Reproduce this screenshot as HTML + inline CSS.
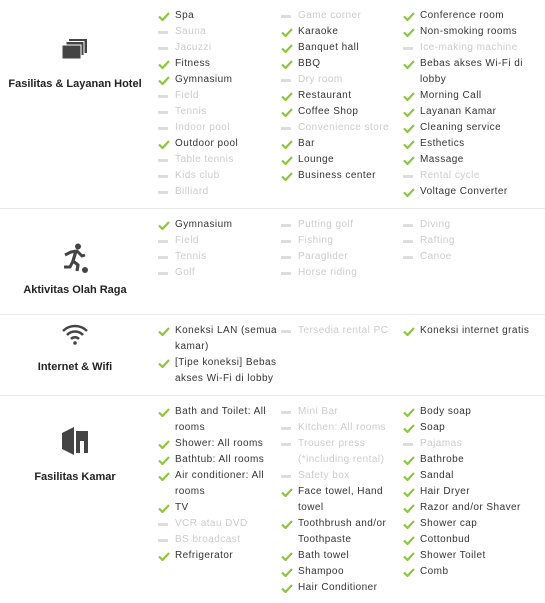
<!DOCTYPE html>
<html><head><meta charset="utf-8"><style>
*{margin:0;padding:0;box-sizing:border-box}
body{width:545px;height:603px;background:#fff;font-family:"Liberation Sans",Arial,sans-serif;overflow:hidden;position:relative}
.sec{position:absolute;left:0;width:545px;border-bottom:1px solid #e8e8e8}
.lab{position:absolute;left:0;width:150px;text-align:center;font-weight:bold;font-size:11px;color:#222}
.ic{position:absolute;left:0;width:150px;text-align:center}
.col{position:absolute;list-style:none}
.col li{position:relative;padding-left:17px;font-size:10px;line-height:16px;letter-spacing:.45px;color:#333}
.col li.n{color:#ccc}
.col li.n::before{content:"";position:absolute;left:0;top:7px;width:10px;height:3px;background:#ddd}
.chk{position:absolute;left:0;top:4px}
.c1{left:158px;width:122px}.c2{left:281px;width:120px}.c3{left:403px;width:140px}
</style></head><body>
<svg width="0" height="0" style="position:absolute"><defs><symbol id="k" viewBox="0 0 12 9"><path d="M1 4.5 L4.5 8 L11 1" fill="none" stroke="#8dc63f" stroke-width="2.2"/></symbol></defs></svg>

<div class="sec" style="top:0;height:209px">
 <div class="ic" style="top:39px"><svg width="28" height="22" viewBox="0 0 28 22"><rect x="8" y="0" width="18" height="14" fill="#444"/><rect x="5" y="2.5" width="18" height="14" fill="#444" stroke="#fff" stroke-width="1"/><rect x="1" y="6" width="19" height="14" fill="#444" stroke="#fff" stroke-width="1"/></svg></div>
 <div class="lab" style="top:78px">Fasilitas &amp; Layanan Hotel</div>
 <ul class="col c1" style="top:8px">
  <li class="y">Spa</li><li class="n">Sauna</li><li class="n">Jacuzzi</li><li class="y">Fitness</li><li class="y">Gymnasium</li><li class="n">Field</li><li class="n">Tennis</li><li class="n">Indoor pool</li><li class="y">Outdoor pool</li><li class="n">Table tennis</li><li class="n">Kids club</li><li class="n">Billiard</li>
 </ul>
 <ul class="col c2" style="top:8px">
  <li class="n">Game corner</li><li class="y">Karaoke</li><li class="y">Banquet hall</li><li class="y">BBQ</li><li class="n">Dry room</li><li class="y">Restaurant</li><li class="y">Coffee Shop</li><li class="n">Convenience store</li><li class="y">Bar</li><li class="y">Lounge</li><li class="y">Business center</li>
 </ul>
 <ul class="col c3" style="top:8px">
  <li class="y">Conference room</li><li class="y">Non-smoking rooms</li><li class="n">Ice-making machine</li><li class="y">Bebas akses Wi-Fi di lobby</li><li class="y">Morning Call</li><li class="y">Layanan Kamar</li><li class="y">Cleaning service</li><li class="y">Esthetics</li><li class="y">Massage</li><li class="n">Rental cycle</li><li class="y">Voltage Converter</li>
 </ul>
</div>

<div class="sec" style="top:209px;height:106px">
 <div class="ic" style="top:34px"><svg width="28" height="30" viewBox="0 0 28 30"><circle cx="17" cy="3.5" r="3" fill="#444"/><path d="M4 12 L10 9 L16 8 L21 13 L24 12" fill="none" stroke="#444" stroke-width="3" stroke-linejoin="round"/><path d="M15 8 L12 18 L17 22 L16 28" fill="none" stroke="#444" stroke-width="3.2" stroke-linejoin="round"/><path d="M12 18 L9 24 L3 24" fill="none" stroke="#444" stroke-width="3" stroke-linejoin="round"/><circle cx="24" cy="27" r="3" fill="#444"/></svg></div>
 <div class="lab" style="top:75px">Aktivitas Olah Raga</div>
 <ul class="col c1" style="top:8px"><li class="y">Gymnasium</li><li class="n">Field</li><li class="n">Tennis</li><li class="n">Golf</li></ul>
 <ul class="col c2" style="top:8px"><li class="n">Putting golf</li><li class="n">Fishing</li><li class="n">Paraglider</li><li class="n">Horse riding</li></ul>
 <ul class="col c3" style="top:8px"><li class="n">Diving</li><li class="n">Rafting</li><li class="n">Canoe</li></ul>
</div>

<div class="sec" style="top:315px;height:81px">
 <div class="ic" style="top:8px"><svg width="28" height="22" viewBox="0 0 28 22"><path d="M2 8 A17 17 0 0 1 26 8" fill="none" stroke="#444" stroke-width="2.5"/><path d="M6 12 A11 11 0 0 1 22 12" fill="none" stroke="#444" stroke-width="2.5"/><path d="M10 16 A5.5 5.5 0 0 1 18 16" fill="none" stroke="#444" stroke-width="2.5"/><circle cx="14" cy="20" r="1.8" fill="#444"/></svg></div>
 <div class="lab" style="top:46px">Internet &amp; Wifi</div>
 <ul class="col c1" style="top:8px"><li class="y">Koneksi LAN (semua kamar)</li><li class="y">[Tipe koneksi] Bebas akses Wi-Fi di lobby</li></ul>
 <ul class="col c2" style="top:8px"><li class="n">Tersedia rental PC</li></ul>
 <ul class="col c3" style="top:8px"><li class="y">Koneksi internet gratis</li></ul>
</div>

<div class="sec" style="top:396px;height:207px;border:none">
 <div class="ic" style="top:31px"><svg width="30" height="28" viewBox="0 0 30 28"><path d="M2 6 L14 0 L14 28 L2 22 Z" fill="#444"/><path d="M16 4 L28 4 L28 26 L24 26 L24 14 L20 14 L20 26 L16 26 Z" fill="#444"/></svg></div>
 <div class="lab" style="top:75px">Fasilitas Kamar</div>
 <ul class="col c1" style="top:8px"><li class="y">Bath and Toilet: All rooms</li><li class="y">Shower: All rooms</li><li class="y">Bathtub: All rooms</li><li class="y">Air conditioner: All rooms</li><li class="y">TV</li><li class="n">VCR atau DVD</li><li class="n">BS broadcast</li><li class="y">Refrigerator</li></ul>
 <ul class="col c2" style="top:8px"><li class="n">Mini Bar</li><li class="n">Kitchen: All rooms</li><li class="n">Trouser press (*including rental)</li><li class="n">Safety box</li><li class="y">Face towel, Hand towel</li><li class="y">Toothbrush and/or Toothpaste</li><li class="y">Bath towel</li><li class="y">Shampoo</li><li class="y">Hair Conditioner</li></ul>
 <ul class="col c3" style="top:8px"><li class="y">Body soap</li><li class="y">Soap</li><li class="n">Pajamas</li><li class="y">Bathrobe</li><li class="y">Sandal</li><li class="y">Hair Dryer</li><li class="y">Razor and/or Shaver</li><li class="y">Shower cap</li><li class="y">Cottonbud</li><li class="y">Shower Toilet</li><li class="y">Comb</li></ul>
</div>

<script>
document.querySelectorAll('li.y').forEach(function(l){
 l.insertAdjacentHTML('afterbegin','<svg class="chk" width="12" height="9"><use href="#k"/></svg>');
});
</script>
</body></html>
